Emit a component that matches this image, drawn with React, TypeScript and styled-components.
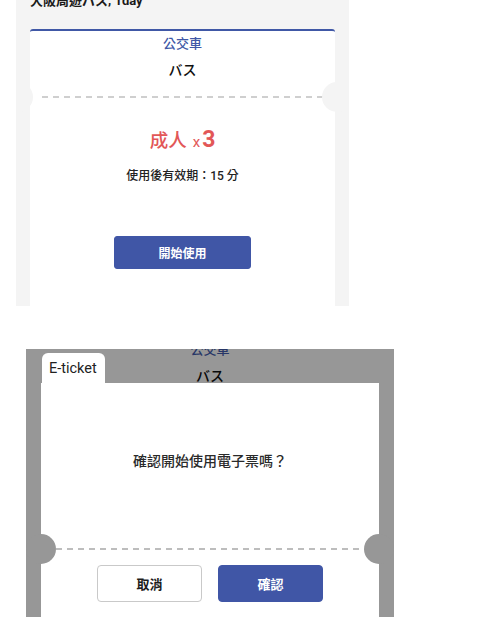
import React from "react";
import styled, { createGlobalStyle } from "styled-components";

const GlobalStyle = createGlobalStyle`
  body {
    margin: 0;
    background: #ffffff;
    font-family: Roboto, "Noto Sans CJK TC", "Noto Sans CJK JP", sans-serif;
  }
`;

const Page = styled.div`
  display: flex;
  flex-direction: column;
  width: 488px;
  height: 640px;
`;

const Shot = styled.div<{ $left: number; $top: number; $width: number; $height: number }>`
  position: relative;
  margin-left: ${(p) => p.$left}px;
  margin-top: ${(p) => p.$top}px;
  width: ${(p) => p.$width}px;
  height: ${(p) => p.$height}px;
  overflow: hidden;
  background: #f4f4f4;
  display: flex;
  flex-direction: column;
  box-sizing: border-box;
`;

const TicketScreen = styled.div`
  display: flex;
  flex-direction: column;
  flex: 1;
  padding: 0 14px;
`;

const Heading = styled.div`
  margin-top: -8px;
  height: 18px;
  line-height: 18px;
  font-size: 13px;
  font-weight: 700;
  color: #1a1a1a;
  white-space: nowrap;
`;

const Card = styled.div`
  position: relative;
  flex: 1;
  margin-top: 19px;
  background: #ffffff;
  border-top: 2px solid #4058a6;
  border-radius: 3px 3px 0 0;
  display: flex;
  flex-direction: column;
  align-items: center;
  padding-top: 4px;
`;

const Category = styled.div`
  font-size: 13px;
  line-height: 18px;
  font-weight: 500;
  color: #4058a6;
`;

const TicketName = styled.div<{ $top: number }>`
  margin-top: ${(p) => p.$top}px;
  font-size: 14px;
  line-height: 20px;
  font-weight: 500;
  color: #111;
`;

const Perforation = styled.div<{ $top: number; $inset: number; $leftOffset: number; $rightOffset: number; $hole: string; $dash: string }>`
  position: relative;
  align-self: stretch;
  margin-top: ${(p) => p.$top}px;
  height: 2px;

  &::before {
    content: "";
    display: block;
    height: 2px;
    margin: 0 ${(p) => p.$inset}px;
    background: repeating-linear-gradient(to right, ${(p) => p.$dash} 0 6px, transparent 6px 11px);
  }

  & > span {
    position: absolute;
    top: -14px;
    width: 30px;
    height: 30px;
    border-radius: 50%;
    background: ${(p) => p.$hole};
  }
  & > span:first-child {
    left: ${(p) => p.$leftOffset}px;
  }
  & > span:last-child {
    right: ${(p) => p.$rightOffset}px;
  }
`;

const Passenger = styled.div`
  margin-top: 27px;
  height: 30px;
  display: flex;
  align-items: baseline;
  color: #e25757;
  font-size: 18.5px;
  line-height: 30px;
  font-weight: 500;
`;

const Times = styled.span`
  margin-left: 6px;
  font-size: 15px;
  font-weight: 400;
`;

const Count = styled.span`
  font-size: 23px;
  font-weight: 700;
  margin-left: 2px;
`;

const Validity = styled.div`
  margin-top: 12px;
  font-size: 12px;
  line-height: 18px;
  font-weight: 500;
  color: #222;
`;

const Button = styled.button<{ $primary?: boolean; $w: number; $h: number }>`
  width: ${(p) => p.$w}px;
  height: ${(p) => p.$h}px;
  border-radius: 4px;
  border: 1px solid ${(p) => (p.$primary ? "#4056a6" : "#c9c9c9")};
  background: ${(p) => (p.$primary ? "#4056a6" : "#ffffff")};
  color: ${(p) => (p.$primary ? "#ffffff" : "#1d1d1d")};
  font-family: inherit;
  font-size: 13px;
  font-weight: 700;
  padding: 0;
  cursor: pointer;
`;

const StartButton = styled(Button)`
  margin-top: 51px;
  font-size: 12px;
  border-radius: 3px;
`;

const Underlay = styled.div`
  display: flex;
  flex-direction: column;
  align-items: center;
  margin-top: -8px;
`;

const Overlay = styled.div`
  position: absolute;
  inset: 0;
  background: rgba(0, 0, 0, 0.38);
  display: flex;
  flex-direction: column;
  padding: 4px 15px 0;
`;

const Tab = styled.div`
  align-self: flex-start;
  margin-left: 1px;
  height: 30px;
  padding: 0 8px 0 7px;
  background: #ffffff;
  border-radius: 6px 6px 0 0;
  font-size: 14.5px;
  line-height: 31px;
  color: #222;
`;

const Sheet = styled.div`
  flex: 1;
  background: #ffffff;
  display: flex;
  flex-direction: column;
  align-items: center;
  padding-top: 68px;
`;

const Question = styled.div`
  font-size: 14px;
  line-height: 20px;
  font-weight: 500;
  color: #2a2a2a;
`;

const Actions = styled.div`
  display: flex;
  gap: 16px;
  margin-top: 15px;
`;

export default function App() {
  return (
    <>
      <GlobalStyle />
      <Page>
        <Shot $left={16} $top={0} $width={333} $height={306}>
          <TicketScreen>
            <Heading>大阪周遊パス, 1day</Heading>
            <Card>
              <Category>公交車</Category>
              <TicketName $top={7}>バス</TicketName>
              <Perforation $top={16} $inset={12} $leftOffset={-27} $rightOffset={-17} $hole="#f4f4f4" $dash="#cfcfcf">
                <span />
                <span />
              </Perforation>
              <Passenger>
                成人<Times>x</Times>
                <Count>3</Count>
              </Passenger>
              <Validity>使用後有效期：15 分</Validity>
              <StartButton $primary $w={137} $h={33}>
                開始使用
              </StartButton>
            </Card>
          </TicketScreen>
        </Shot>

        <Shot $left={26} $top={43} $width={368} $height={268}>
          <Underlay>
            <Category>公交車</Category>
            <TicketName $top={7}>バス</TicketName>
          </Underlay>
          <Overlay>
            <Tab>E-ticket</Tab>
            <Sheet>
              <Question>確認開始使用電子票嗎？</Question>
              <Perforation $top={77} $inset={15} $leftOffset={-15} $rightOffset={-15} $hole="#979797" $dash="#bdbdbd">
                <span />
                <span />
              </Perforation>
              <Actions>
                <Button $w={105} $h={37}>取消</Button>
                <Button $primary $w={105} $h={37}>確認</Button>
              </Actions>
            </Sheet>
          </Overlay>
        </Shot>
      </Page>
    </>
  );
}
